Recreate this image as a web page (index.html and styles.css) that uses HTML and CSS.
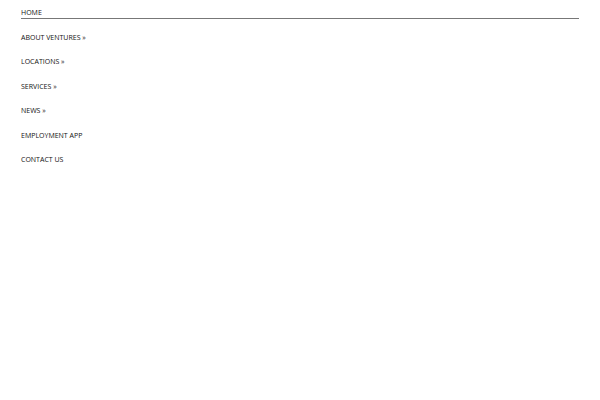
FILE: index.html
```html
<!DOCTYPE html>
<html>

<head>
    <meta charset="utf-8">
    <title>Menu</title>
    <meta name="viewport" content="width=device-width, initial-scale=1">
    <link rel="stylesheet" href="styles.css">
</head>

<body>
    <nav class="mobile-nav">
        <ul class="menu">
            <li class="menu-item active"><a href="#">HOME</a></li>
            <li class="menu-item"><a href="#">ABOUT VENTURES &raquo;</a></li>
            <li class="menu-item"><a href="#">LOCATIONS &raquo;</a></li>
            <li class="menu-item"><a href="#">SERVICES &raquo;</a></li>
            <li class="menu-item"><a href="#">NEWS &raquo;</a></li>
            <li class="menu-item"><a href="#">EMPLOYMENT APP</a></li>
            <li class="menu-item"><a href="#">CONTACT US</a></li>
        </ul>
    </nav>
</body>

</html>
```
FILE: styles.css
```css
body {
    margin: 0;
    padding: 0;
    background-color: white;
    font-family: "Open Sans", "Lato", sans-serif;
}

.mobile-nav {
    background-color: white;
    box-shadow: 0 2px 4px rgba(0, 0, 0, 0.1);
    padding: 0 21px;
}

.menu {
    list-style: none;
    margin: 0;
    padding: 0;
}

.menu-item {
    height: 24.5px;
}

.menu-item a {
    display: block;
    color: #111;
    text-decoration: none;
    font-size: 7px;
    line-height: 10px;
    padding: 8px 0 0 0;
}

.menu-item.active a {
    border-bottom: 1px solid #777;
}
```
